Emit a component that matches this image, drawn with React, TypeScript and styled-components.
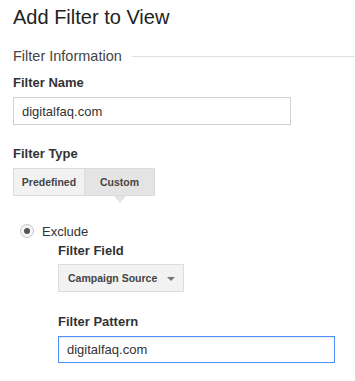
import React from "react";
import styled, { createGlobalStyle } from "styled-components";

const Global = createGlobalStyle`
  html, body { margin: 0; padding: 0; background: #fff; }
  body { font-family: "Liberation Sans", Arial, sans-serif; color: #333; }
`;

const Page = styled.div`
  padding: 5px 13px 0 13px;
  width: 355px;
  box-sizing: border-box;
`;

const Title = styled.h1`
  margin: 0;
  font-size: 20px;
  line-height: 24px;
  font-weight: normal;
  color: #222;
`;

const SectionHeader = styled.div`
  margin-top: 18px;
  display: flex;
  align-items: center;
  gap: 10px;
  font-size: 14.5px;
  line-height: 18px;
  color: #444;
  margin-right: -13px;
  &::after {
    content: "";
    flex: 1;
    height: 1px;
    background: #e0e0e0;
    margin-top: 1px;
  }
`;

const Label = styled.div<{ $mt: number }>`
  margin-top: ${(p) => p.$mt}px;
  font-size: 13px;
  line-height: 16px;
  font-weight: bold;
  color: #333;
`;

const TextInput = styled.div<{ $w: number; $h: number; $focus?: boolean; $mt: number }>`
  margin-top: ${(p) => p.$mt}px;
  width: ${(p) => p.$w}px;
  height: ${(p) => p.$h}px;
  box-sizing: border-box;
  border: 1px solid ${(p) => (p.$focus ? "#4d90fe" : "#d0d0d0")};
  ${(p) => (p.$focus ? "box-shadow: inset 0 1px 2px rgba(0,0,0,0.1);" : "")}
  display: flex;
  align-items: center;
  padding-left: 8px;
  font-size: 13px;
  color: #333;
`;

const Segmented = styled.div`
  margin-top: 6px;
  display: inline-flex;
  height: 28px;
`;

const SegButton = styled.div<{ $active?: boolean; $w: number }>`
  position: relative;
  width: ${(p) => p.$w}px;
  height: 28px;
  box-sizing: border-box;
  display: flex;
  align-items: center;
  justify-content: center;
  font-size: 10.5px;
  font-weight: bold;
  color: #444;
  background: ${(p) => (p.$active ? "#e4e4e4" : "#f2f2f2")};
  border: 1px solid #dcdcdc;
  & + & { border-left: none; }
  ${(p) =>
    p.$active
      ? `&::after {
          content: "";
          position: absolute;
          left: 50%;
          bottom: -8px;
          margin-left: -6px;
          border-left: 6px solid transparent;
          border-right: 6px solid transparent;
          border-top: 7px solid #e4e4e4;
        }`
      : ""}
`;

const RadioRow = styled.div`
  margin-top: 27px;
  margin-left: 7px;
  display: flex;
  align-items: center;
  gap: 8px;
  height: 16px;
  font-size: 13px;
  color: #333;
`;

const Radio = styled.span`
  width: 14px;
  height: 14px;
  box-sizing: border-box;
  border-radius: 50%;
  border: 1px solid #c8c8c8;
  background: #f4f4f4;
  display: flex;
  align-items: center;
  justify-content: center;
  &::after {
    content: "";
    width: 6px;
    height: 6px;
    border-radius: 50%;
    background: #555;
  }
`;

const Nested = styled.div`
  margin-left: 45px;
`;

const Dropdown = styled.div`
  margin-top: 5px;
  width: 126px;
  height: 28px;
  box-sizing: border-box;
  border: 1px solid #dcdcdc;
  background: #f2f2f2;
  display: flex;
  align-items: center;
  justify-content: space-between;
  padding: 0 8px 0 9px;
  font-size: 10.5px;
  font-weight: bold;
  color: #444;
  &::after {
    content: "";
    border-left: 4px solid transparent;
    border-right: 4px solid transparent;
    border-top: 4px solid #777;
    margin-top: 2px;
  }
`;

export default function App() {
  return (
    <>
      <Global />
      <Page>
        <Title>Add Filter to View</Title>
        <SectionHeader>Filter Information</SectionHeader>
        <Label $mt={10}>Filter Name</Label>
        <TextInput $mt={6} $w={278} $h={28}>digitalfaq.com</TextInput>
        <Label $mt={21}>Filter Type</Label>
        <Segmented>
          <SegButton $w={72}>Predefined</SegButton>
          <SegButton $w={70} $active>Custom</SegButton>
        </Segmented>
        <RadioRow>
          <Radio />
          Exclude
        </RadioRow>
        <Nested>
          <Label $mt={4}>Filter Field</Label>
          <Dropdown>Campaign Source</Dropdown>
          <Label $mt={22}>Filter Pattern</Label>
          <TextInput $mt={6} $w={277} $h={27} $focus>digitalfaq.com</TextInput>
        </Nested>
      </Page>
    </>
  );
}
